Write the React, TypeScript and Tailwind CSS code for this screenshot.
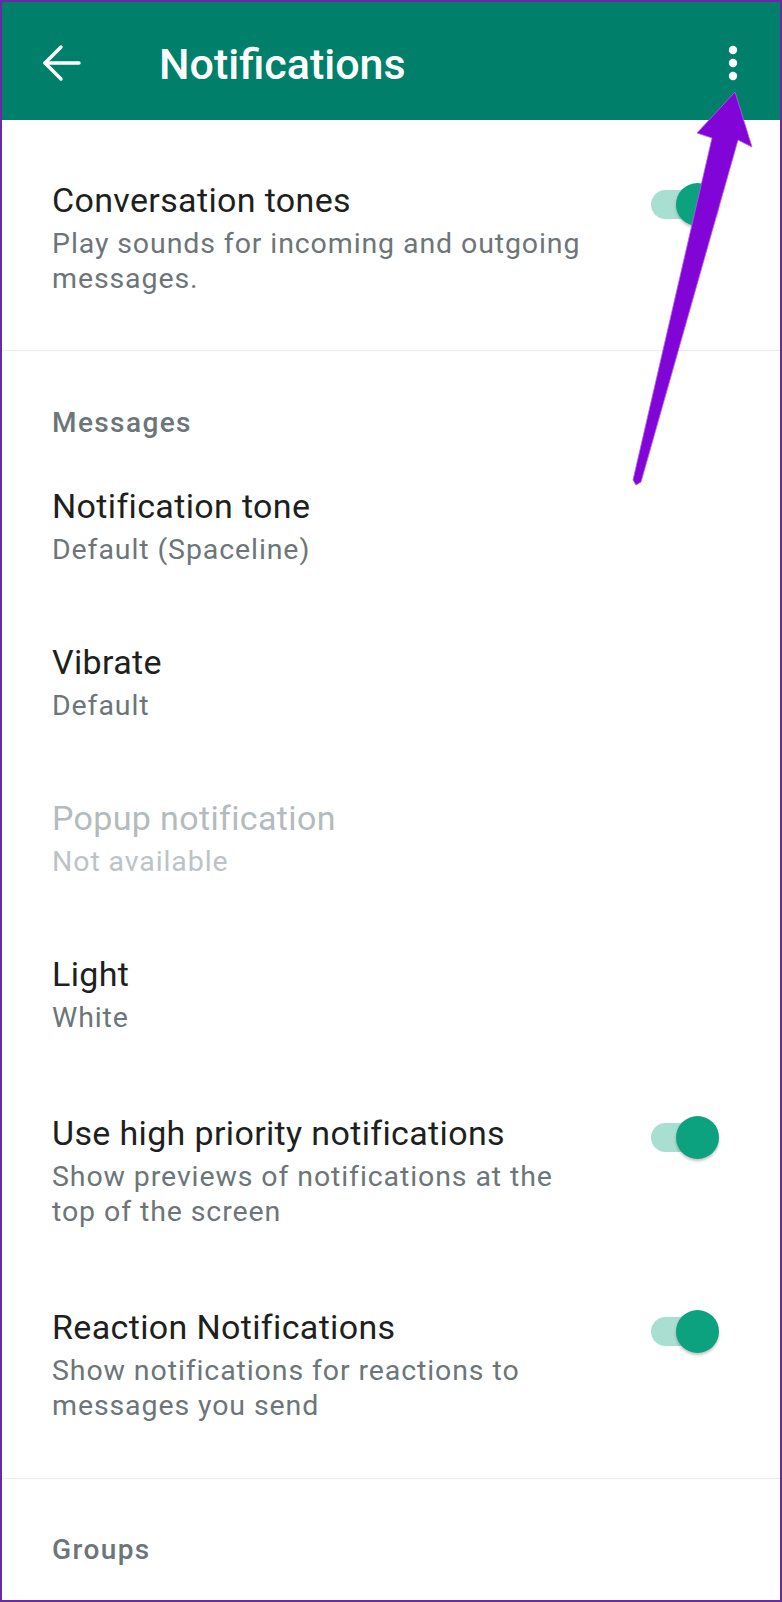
import React from "react"

type RowProps = {
  title: string
  subtitle: string
  toggle?: boolean
  disabled?: boolean
}

function Toggle() {
  return (
    <div className="relative mt-[3px] h-[43px] w-[68px] shrink-0">
      <div className="absolute left-0 top-[7px] h-[29px] w-[52px] rounded-full bg-[#a9dfd1]" />
      <div className="absolute right-0 top-0 h-[43px] w-[43px] rounded-full bg-[#0ca27f] shadow-[0_2px_3px_rgba(0,0,0,0.25)]" />
    </div>
  )
}

function Row({ title, subtitle, toggle, disabled }: RowProps) {
  return (
    <div
      className={
        toggle
          ? "flex items-start justify-between pl-[50px] pr-[61px] pt-[41px] pb-[37px]"
          : "flex items-start justify-between pl-[50px] pr-[61px] py-[37.5px]"
      }
    >
      <div className="w-[535px]">
        <div
          className={
            disabled
              ? "text-[34px] leading-[40px] tracking-[0.35px] text-[#b4bbbe]"
              : "text-[34px] leading-[40px] tracking-[0.35px] text-[#1d1f20]"
          }
        >
          {title}
        </div>
        <div
          className={
            disabled
              ? "mt-[6px] text-[28.5px] leading-[35px] tracking-[0.9px] text-[#bcc3c6]"
              : "mt-[6px] text-[28.5px] leading-[35px] tracking-[0.9px] text-[#6c7579]"
          }
        >
          {subtitle}
        </div>
      </div>
      {toggle && <Toggle />}
    </div>
  )
}

export default function App() {
  return (
    <div
      className="relative h-[1602px] w-[782px] overflow-hidden border-2 border-[#6a2aa6] bg-white"
      style={{ fontFamily: "Roboto, 'Noto Sans', sans-serif" }}
    >
      {/* app bar */}
      <div className="flex h-[118px] items-center bg-[#00806a] pl-[40px] pr-[42px] pt-[4px]">
        <svg width="40" height="40" viewBox="0 0 40 40" fill="none" stroke="white" strokeWidth="3.4" strokeLinecap="round" strokeLinejoin="round">
          <path d="M3 20h34" />
          <path d="M19 4 3 20l16 16" />
        </svg>
        <div className="ml-[77px] mt-[2px] text-[43px] font-medium leading-[50px] text-white">Notifications</div>
        <svg className="ml-auto" width="10" height="36" viewBox="0 0 10 36" fill="white">
          <circle cx="5" cy="5" r="4.2" />
          <circle cx="5" cy="18" r="4.2" />
          <circle cx="5" cy="31" r="4.2" />
        </svg>
      </div>

      <div className="pt-[60px] pb-[54px]">
        <div className="flex items-start justify-between pl-[50px] pr-[61px]">
          <div className="w-[535px]">
            <div className="text-[34px] leading-[40px] tracking-[0.35px] text-[#1d1f20]">Conversation tones</div>
            <div className="mt-[6px] text-[28.5px] leading-[35px] tracking-[0.9px] text-[#6c7579]">
              Play sounds for incoming and outgoing messages.
            </div>
          </div>
          <Toggle />
        </div>
      </div>

      <div className="h-px bg-[#ebeded]" />

      <div className="pt-[54px] pb-[18px]">
        <div className="pl-[50px] pb-[8px] text-[28px] font-medium leading-[35px] tracking-[1.4px] text-[#6c7579]">Messages</div>
        <Row title="Notification tone" subtitle="Default (Spaceline)" />
        <Row title="Vibrate" subtitle="Default" />
        <Row title="Popup notification" subtitle="Not available" disabled />
        <Row title="Light" subtitle="White" />
        <Row title="Use high priority notifications" subtitle="Show previews of notifications at the top of the screen" toggle />
        <Row title="Reaction Notifications" subtitle="Show notifications for reactions to messages you send" toggle />
      </div>

      <div className="h-px bg-[#ebeded]" />

      <div className="pt-[53px]">
        <div className="pl-[50px] text-[28px] font-medium leading-[35px] tracking-[1.4px] text-[#6c7579]">Groups</div>
      </div>

      {/* annotation arrow */}
      <svg className="pointer-events-none absolute -left-[2px] -top-[2px]" width="782" height="1602" viewBox="0 0 782 1602">
        <polygon
          points="735,92 752,147 738,140 641,482 636,485 633,480 712,138 697,133"
          fill="#8205d8"
          stroke="#b25cf0"
          strokeWidth="0.8"
          strokeLinejoin="round"
        />
      </svg>
    </div>
  )
}
